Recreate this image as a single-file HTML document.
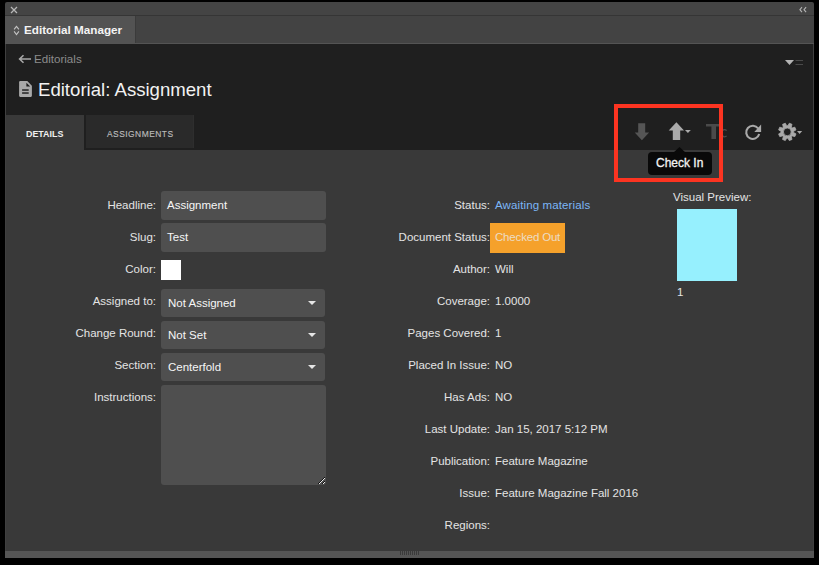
<!DOCTYPE html>
<html><head><meta charset="utf-8">
<style>
*{margin:0;padding:0;box-sizing:border-box}
html,body{width:819px;height:565px;overflow:hidden;background:#000;font-family:"Liberation Sans",sans-serif;position:relative}
div,span,svg{position:absolute}
.lbl{color:#e4e4e4;font-size:11.5px;line-height:14px;white-space:nowrap;text-align:right}
.val{color:#e4e4e4;font-size:11.5px;line-height:14px;white-space:nowrap}
.box{background:#4f4f4f;border-radius:3px}
.tri{width:0;height:0;border-left:4px solid transparent;border-right:4px solid transparent;border-top:4px solid #e6e6e6}
.itxt{color:#f6f6f6;font-size:11.5px;line-height:14px;white-space:nowrap}
</style></head><body>
<!-- frame -->
<div style="left:5px;top:2px;width:809px;height:13px;background:#444;border-radius:2px 2px 0 0"></div>
<div style="left:5px;top:15px;width:809px;height:1px;background:#353535"></div>
<div style="left:5px;top:16px;width:809px;height:27px;background:#434343"></div>
<div style="left:5px;top:16px;width:130px;height:27px;background:#535353"></div>
<div style="left:135px;top:16px;width:1px;height:27px;background:#3b3b3b"></div>
<div style="left:5px;top:43px;width:809px;height:1px;background:#545454"></div>
<div style="left:5px;top:44px;width:809px;height:507px;background:#3f3f3f"></div>
<div style="left:6px;top:44px;width:807px;height:106px;background:#1f1f1f"></div>
<div style="left:6px;top:150px;width:807px;height:401px;background:#393939"></div>
<div style="left:5px;top:551px;width:809px;height:7px;background:#555"></div>

<!-- top bar icons -->
<svg style="left:10px;top:6px" width="8" height="8" viewBox="0 0 8 8"><path d="M1 1L7 7M7 1L1 7" stroke="#b8b8b8" stroke-width="1.3"/></svg>
<svg style="left:798px;top:5px" width="10" height="10" viewBox="0 0 10 10"><path d="M4 2.2L1.9 4.7L4 7.2M8.1 2.2L6 4.7L8.1 7.2" stroke="#b4b4b4" stroke-width="1.1" fill="none"/></svg>

<!-- panel tab title -->
<svg style="left:13px;top:25px" width="7" height="11" viewBox="0 0 7 11"><path d="M1.1 4.4L3.5 1.3L5.9 4.4M1.1 6.4L3.5 9.6L5.9 6.4" stroke="#c4c4c4" stroke-width="1.1" fill="none"/></svg>
<div style="left:24px;top:23px;font-size:11.7px;line-height:14px;font-weight:bold;color:#f4f4f4;white-space:nowrap">Editorial Manager</div>

<!-- header -->
<svg style="left:18px;top:54px" width="14" height="10" viewBox="0 0 14 10"><path d="M13 5H2M5.5 1.2L1.6 5L5.5 8.8" stroke="#a8a8a8" stroke-width="1.6" fill="none"/></svg>
<div style="left:34px;top:52px;font-size:12px;line-height:14px;color:#8c8c8c;white-space:nowrap;font-size:11.6px">Editorials</div>
<svg style="left:17px;top:79px" width="18" height="20" viewBox="0 0 18 20"><path d="M3.2 2.1H10.3L14.9 6.7V16.8Q14.9 17.9 13.8 17.9H3.2Q2.1 17.9 2.1 16.8V3.2Q2.1 2.1 3.2 2.1Z" fill="#a9a9a9"/><path d="M9.4 3.8V7.6H13.2Z" fill="#1f1f1f"/><rect x="5.1" y="10.3" width="6.6" height="1.45" fill="#1f1f1f"/><rect x="5.1" y="13.3" width="6.6" height="1.45" fill="#1f1f1f"/></svg>
<div style="left:38px;top:79px;font-size:18.6px;line-height:22px;color:#f2f2f2;white-space:nowrap">Editorial: Assignment</div>
<svg style="left:784px;top:59px" width="20" height="7" viewBox="0 0 20 7"><path d="M1 1H10L5.5 6Z" fill="#b4b4b4"/><rect x="11.5" y="1" width="7.5" height="1" fill="#4a4a4a"/><rect x="11.5" y="5" width="7.5" height="1" fill="#4a4a4a"/></svg>

<!-- tabs -->
<div style="left:6px;top:115px;width:78px;height:35px;background:#393939"></div>
<div style="left:26px;top:128px;font-size:9.8px;line-height:12px;font-weight:bold;color:#f0f0f0;white-space:nowrap;transform:scaleX(0.907);transform-origin:0 0">DETAILS</div>
<div style="left:86px;top:115px;width:108px;height:33px;background:#2a2a2a;border-right:1px solid #2e2e2e"></div>
<div style="left:107px;top:127.5px;font-size:9.8px;line-height:12px;color:#bcbcbc;-webkit-text-stroke:0.15px #bcbcbc;letter-spacing:0.55px;white-space:nowrap;transform:scaleX(0.86);transform-origin:0 0">ASSIGNMENTS</div>

<!-- toolbar -->
<svg style="left:634px;top:123px" width="16" height="18" viewBox="0 0 16 18"><path d="M4.2 0.3H11.2V9.5H15.1L7.9 17.3L0.7 9.5H4.2Z" fill="#555"/></svg>
<svg style="left:668px;top:122px" width="24" height="19" viewBox="0 0 24 19"><path d="M8.4 0.3L16 8.5H12.2V18H4.8V8.5H0.7Z" fill="#aaa"/><path d="M17 8.1H22.8L19.9 11Z" fill="#aaa"/></svg>
<svg style="left:704px;top:122px" width="26" height="19" viewBox="0 0 26 19"><path d="M2 2H18V4.6H12V17.1H7.4V4.6H2Z" fill="#4a4a4a"/><path d="M22.6 8.6A3 3.6 0 1 0 22.6 13.9" stroke="#4d4d4d" stroke-width="1.3" fill="none"/></svg>
<svg style="left:744px;top:123px" width="18" height="18" viewBox="0 0 18 18"><path d="M15.2 11A6.6 6.6 0 1 1 14.2 5.5" stroke="#a9a9a9" stroke-width="2.1" fill="none"/><path d="M17.1 1.6V9.1H10.3Z" fill="#a9a9a9"/></svg>
<svg style="left:777px;top:122px" width="27" height="21" viewBox="0 0 27 21">
<g transform="translate(10.3 9.9)"><path d="M0.00 -6.30 L0.60 -6.27 L2.00 -8.67 L4.72 -7.55 L4.01 -4.86 L4.45 -4.45 L4.86 -4.01 L7.55 -4.72 L8.67 -2.00 L6.27 -0.60 L6.30 -0.00 L6.27 0.60 L8.67 2.00 L7.55 4.72 L4.86 4.01 L4.45 4.45 L4.01 4.86 L4.72 7.55 L2.00 8.67 L0.60 6.27 L0.00 6.30 L-0.60 6.27 L-2.00 8.67 L-4.72 7.55 L-4.01 4.86 L-4.45 4.45 L-4.86 4.01 L-7.55 4.72 L-8.67 2.00 L-6.27 0.60 L-6.30 0.00 L-6.27 -0.60 L-8.67 -2.00 L-7.55 -4.72 L-4.86 -4.01 L-4.45 -4.45 L-4.01 -4.86 L-4.72 -7.55 L-2.00 -8.67 L-0.60 -6.27Z M3.9 0A3.9 3.9 0 1 0 -3.9 0A3.9 3.9 0 1 0 3.9 0Z" fill="#a9a9a9" fill-rule="evenodd" stroke="#a9a9a9" stroke-width="0.8" stroke-linejoin="round"/></g>
<path d="M20 9H25.2L22.6 12Z" fill="#a9a9a9"/>
</svg>

<!-- tooltip -->
<div style="left:648px;top:152px;width:64px;height:23px;background:#090909;border-radius:4px"></div>
<svg style="left:673px;top:147px" width="13" height="6" viewBox="0 0 13 6"><path d="M0 6L6.5 0L13 6Z" fill="#090909"/></svg>
<div style="left:656px;top:156px;font-size:12px;line-height:14px;color:#f2f2f2;white-space:nowrap;-webkit-text-stroke:0.3px #f2f2f2">Check In</div>

<!-- red highlight -->
<div style="left:614px;top:104px;width:109px;height:78px;border:4px solid #fc3421"></div>

<!-- left form -->
<div class="lbl" style="left:40px;width:116px;top:198px">Headline:</div>
<div class="box" style="left:161px;top:191px;width:165px;height:29px"></div>
<div class="itxt" style="left:167px;top:198px">Assignment</div>

<div class="lbl" style="left:40px;width:116px;top:230px">Slug:</div>
<div class="box" style="left:161px;top:223px;width:165px;height:29px"></div>
<div class="itxt" style="left:167px;top:230px">Test</div>

<div class="lbl" style="left:40px;width:116px;top:262px">Color:</div>
<div style="left:161px;top:260px;width:20px;height:20px;background:#fff"></div>

<div class="lbl" style="left:40px;width:116px;top:294px">Assigned to:</div>
<div class="box" style="left:161px;top:289px;width:164px;height:28px"></div>
<div class="itxt" style="left:168px;top:296px">Not Assigned</div>
<div class="tri" style="left:308px;top:301px"></div>

<div class="lbl" style="left:40px;width:116px;top:326px">Change Round:</div>
<div class="box" style="left:161px;top:321px;width:164px;height:28px"></div>
<div class="itxt" style="left:168px;top:328px">Not Set</div>
<div class="tri" style="left:308px;top:333px"></div>

<div class="lbl" style="left:40px;width:116px;top:358px">Section:</div>
<div class="box" style="left:161px;top:353px;width:164px;height:28px"></div>
<div class="itxt" style="left:168px;top:360px">Centerfold</div>
<div class="tri" style="left:308px;top:365px"></div>

<div class="lbl" style="left:40px;width:116px;top:390px">Instructions:</div>
<div class="box" style="left:161px;top:385px;width:165px;height:100px"></div>
<svg style="left:316px;top:476px" width="10" height="9" shape-rendering="crispEdges"><rect x="2" y="7" width="1" height="1" fill="#111"/><rect x="3" y="6" width="1" height="1" fill="#111"/><rect x="4" y="5" width="1" height="1" fill="#111"/><rect x="5" y="4" width="1" height="1" fill="#111"/><rect x="6" y="3" width="1" height="1" fill="#111"/><rect x="7" y="2" width="1" height="1" fill="#111"/><rect x="8" y="1" width="1" height="1" fill="#111"/><rect x="6" y="7" width="1" height="1" fill="#111"/><rect x="7" y="6" width="1" height="1" fill="#111"/><rect x="8" y="5" width="1" height="1" fill="#111"/><rect x="3" y="7" width="1" height="1" fill="#e8e8e8"/><rect x="4" y="6" width="1" height="1" fill="#e8e8e8"/><rect x="5" y="5" width="1" height="1" fill="#e8e8e8"/><rect x="6" y="4" width="1" height="1" fill="#e8e8e8"/><rect x="7" y="3" width="1" height="1" fill="#e8e8e8"/><rect x="8" y="2" width="1" height="1" fill="#e8e8e8"/><rect x="7" y="7" width="1" height="1" fill="#e8e8e8"/><rect x="8" y="6" width="1" height="1" fill="#e8e8e8"/></svg>

<!-- middle column -->
<div class="lbl" style="left:330px;width:160px;top:198px">Status:</div>
<div class="val" style="left:495px;top:198px;color:#7cb6f6;letter-spacing:0.12px">Awaiting materials</div>
<div class="lbl" style="left:330px;width:160px;top:230px">Document Status:</div>
<div style="left:490px;top:223px;width:75px;height:30px;background:#f5a12b"></div>
<div class="val" style="left:495px;top:230px;color:#ecdcc4;letter-spacing:-0.18px">Checked Out</div>
<div class="lbl" style="left:330px;width:160px;top:262px">Author:</div>
<div class="val" style="left:495px;top:262px">Will</div>
<div class="lbl" style="left:330px;width:160px;top:294px">Coverage:</div>
<div class="val" style="left:495px;top:294px">1.0000</div>
<div class="lbl" style="left:330px;width:160px;top:326px">Pages Covered:</div>
<div class="val" style="left:495px;top:326px">1</div>
<div class="lbl" style="left:330px;width:160px;top:358px">Placed In Issue:</div>
<div class="val" style="left:495px;top:358px">NO</div>
<div class="lbl" style="left:330px;width:160px;top:390px">Has Ads:</div>
<div class="val" style="left:495px;top:390px">NO</div>
<div class="lbl" style="left:330px;width:160px;top:422px">Last Update:</div>
<div class="val" style="left:495px;top:422px">Jan 15, 2017 5:12 PM</div>
<div class="lbl" style="left:330px;width:160px;top:454px">Publication:</div>
<div class="val" style="left:495px;top:454px">Feature Magazine</div>
<div class="lbl" style="left:330px;width:160px;top:486px">Issue:</div>
<div class="val" style="left:495px;top:486px">Feature Magazine Fall 2016</div>
<div class="lbl" style="left:330px;width:160px;top:518px">Regions:</div>

<!-- preview -->
<div class="val" style="left:673px;top:190px">Visual Preview:</div>
<div style="left:677px;top:209px;width:60px;height:72px;background:#96f0fe"></div>
<div class="val" style="left:677px;top:285px">1</div>

<!-- bottom grip -->
<svg style="left:400px;top:551px" width="20" height="4" viewBox="0 0 20 4"><g fill="#3a3a3a"><rect x="0" width="1" height="4"/><rect x="2" width="1" height="4"/><rect x="4" width="1" height="4"/><rect x="6" width="1" height="4"/><rect x="8" width="1" height="4"/><rect x="10" width="1" height="4"/><rect x="12" width="1" height="4"/><rect x="14" width="1" height="4"/><rect x="16" width="1" height="4"/><rect x="18" width="1" height="4"/></g></svg>
</body></html>
